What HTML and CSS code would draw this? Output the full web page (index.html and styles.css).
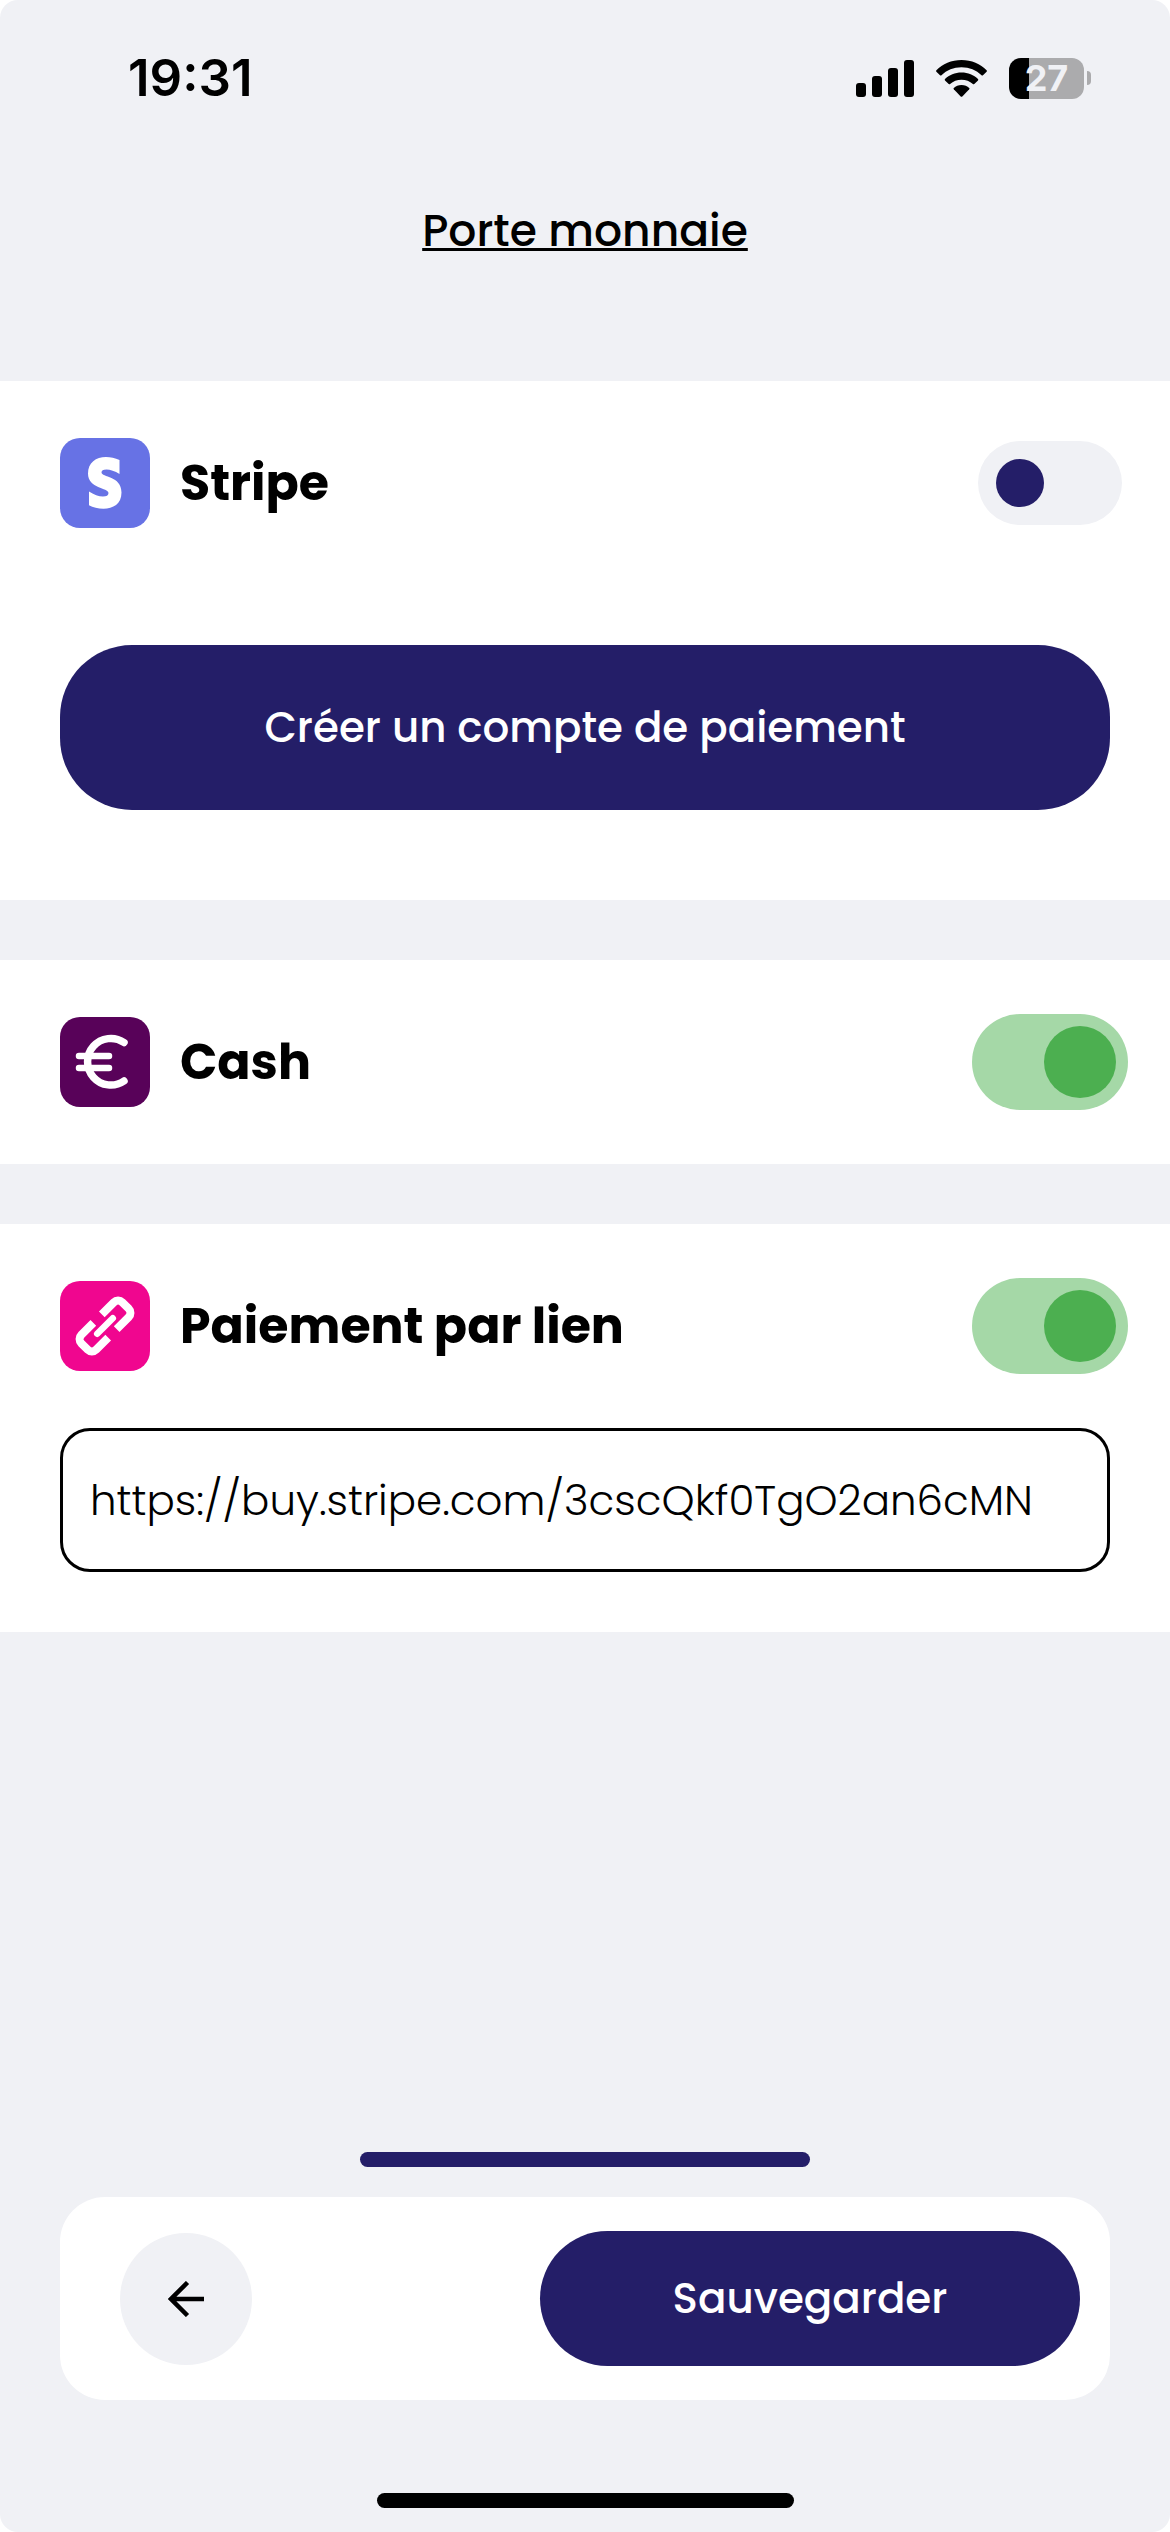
FILE: index.html
```html
<!DOCTYPE html>
<html lang="fr">
<head>
<meta charset="utf-8">
<meta name="viewport" content="width=device-width, initial-scale=1">
<title>Porte monnaie</title>
<link rel="stylesheet" href="styles.css">
</head>
<body>
<div class="screen">
  <div class="status">
    <time class="status-time">19:31</time>
    <div class="status-icons">
      <svg class="signal" viewBox="0 0 58 37" aria-hidden="true">
        <rect x="0" y="23" width="10" height="14" rx="3"/>
        <rect x="16" y="16" width="10" height="21" rx="3"/>
        <rect x="32" y="8" width="10" height="29" rx="3"/>
        <rect x="48" y="0" width="10" height="37" rx="3"/>
      </svg>
      <svg class="wifi" viewBox="0 0 51 37" aria-hidden="true">
        <path d="M25.500 0C35.500 0 44.500 4 50.600 10.200Q51.300 11 50.600 11.700L47 15.300Q46.300 15.800 45.500 15.200C40.300 10 33.300 7.200 25.500 7.200S10.700 10 5.500 15.200Q4.700 15.800 4 15.300L.4 11.700Q-.3 11 .4 10.200C6.500 4 15.500 0 25.500 0Z"/>
        <path d="M25.500 12.500C32 12.500 37.800 15 42 19Q42.600 19.700 42 20.400L38.300 24Q37.600 24.600 36.900 24C33.800 21.200 29.900 19.700 25.500 19.700S17.200 21.200 14.100 24Q13.400 24.600 12.700 24L9 20.400Q8.400 19.700 9 19C13.200 15 19 12.500 25.500 12.500Z"/>
        <path d="M25.500 25C28.600 25 31.300 26.100 33.200 27.900Q33.800 28.600 33.200 29.300L26.300 36.400Q25.500 37.200 24.700 36.400L17.800 29.300Q17.200 28.600 17.800 27.900C19.700 26.100 22.400 25 25.500 25Z"/>
      </svg>
      <div class="battery"><span class="battery-level">27</span><span class="battery-cap"></span></div>
    </div>
  </div>

  <h1 class="title">Porte monnaie</h1>

  <main class="methods">
    <section class="method">
      <div class="method-row">
        <svg class="method-icon" viewBox="0 0 90 90" aria-hidden="true">
          <rect width="90" height="90" rx="20" fill="#6772e5"/>
          <path fill="#fff" d="M59.500 22V36C55 33 50 31.500 46.500 31.500C43 31.500 41.500 32.800 41.500 34.500C41.500 39.500 61.500 37.500 61.500 54.500C61.500 66 53 70.700 43.500 70.700C38 70.700 33 69.500 29 67.200V53.500C33.500 56.500 39 58.500 43 58.500C46.500 58.500 48.500 57.500 48.500 55C48.500 49.500 28 51 28 35.500C28 24.500 36 19 46 19C50.500 19 55 20 59.500 22Z"/>
        </svg>
        <label class="method-name" for="stripe">Stripe</label>
        <input class="toggle" type="checkbox" role="switch" id="stripe">
      </div>
      <button class="button button-create" type="button">Créer un compte de paiement</button>
    </section>

    <section class="method">
      <div class="method-row">
        <svg class="method-icon" viewBox="0 0 90 90" aria-hidden="true">
          <rect width="90" height="90" rx="20" fill="#580259"/>
          <g fill="none" stroke="#fff" stroke-linecap="round">
            <path stroke-width="7.500" d="M64 25.500A23.300 23.300 0 1 0 64 64"/>
            <path stroke-width="6.500" d="M19 39H49M19 51H49"/>
          </g>
        </svg>
        <label class="method-name" for="cash">Cash</label>
        <input class="toggle" type="checkbox" role="switch" id="cash" checked>
      </div>
    </section>

    <section class="method method-link">
      <div class="method-row">
        <svg class="method-icon" viewBox="0 0 90 90" aria-hidden="true">
          <rect width="90" height="90" rx="20" fill="#f0068f"/>
          <g fill="none" stroke="#fff" stroke-width="8" transform="rotate(-45 45 45)">
            <path d="M51 34.500H68a6 6 0 0 1 6 6V49.500a6 6 0 0 1 -6 6H51M39 34.500H22a6 6 0 0 0 -6 6V49.500a6 6 0 0 0 6 6H39"/>
            <path stroke-width="6.500" stroke-linecap="round" d="M34 45H56"/>
          </g>
        </svg>
        <label class="method-name" for="link">Paiement par lien</label>
        <input class="toggle" type="checkbox" role="switch" id="link" checked>
      </div>
      <input class="url" type="url" aria-label="Lien de paiement" value="https://buy.stripe.com/3cscQkf0TgO2an6cMN">
    </section>
  </main>

  <footer class="footer">
    <div class="handle"></div>
    <nav class="actions">
      <button class="back" type="button" aria-label="Retour">
        <svg class="back-icon" viewBox="0 0 36 36" aria-hidden="true"><path d="M36 18H3M19.500 1.500L3 18L19.500 34.500" fill="none" stroke="#000" stroke-width="4.500"/></svg>
      </button>
      <button class="button button-save" type="button">Sauvegarder</button>
    </nav>
    <div class="home-bar"></div>
  </footer>
</div>
</body>
</html>
```
FILE: styles.css
```css
* {
  box-sizing: border-box;
}

body {
  margin: 0;
  background: #fff;
  color: #000;
  font-family: "Poppins", "Inter", sans-serif;
}

.screen {
  display: flex;
  flex-direction: column;
  min-height: 100vh;
  background: #f0f1f5;
  border-radius: 18px;
}

/* Status bar */
.status {
  display: flex;
  align-items: center;
  justify-content: space-between;
  padding: 48px 79px 0 128px;
}

.status-time {
  font-family: "Inter", sans-serif;
  font-size: 51px;
  line-height: 60px;
  font-weight: 600;
}

.status-icons {
  display: flex;
  align-items: center;
  gap: 22px;
}

.signal {
  width: 58px;
  height: 37px;
}

.wifi {
  width: 51px;
  height: 37px;
}

.battery {
  display: flex;
  align-items: center;
  gap: 3px;
}

.battery-level {
  width: 75px;
  height: 41px;
  border-radius: 12px;
  background: linear-gradient(to right, #000 27%, #ababad 27%);
  color: #f0f1f5;
  font-family: "Inter", sans-serif;
  font-size: 36px;
  line-height: 41px;
  font-weight: 700;
  text-align: center;
}

.battery-cap {
  width: 4px;
  height: 14px;
  border-radius: 0 4px 4px 0;
  background: #ababad;
}

.title {
  margin: 92px 0 120px;
  font-size: 44px;
  line-height: 61px;
  font-weight: 500;
  text-align: center;
  text-decoration: underline;
  text-decoration-thickness: 3px;
  text-underline-offset: 2px;
}

/* Payment methods */
.methods {
  display: flex;
  flex-direction: column;
  gap: 60px;
}

.method {
  padding: 54px 60px;
  background: #fff;
}

.method-row {
  display: flex;
  align-items: center;
  gap: 30px;
  height: 96px;
  margin-right: -18px;
}

.method-icon {
  flex: none;
  width: 90px;
  height: 90px;
}

.method-name {
  flex: 1;
  font-size: 49px;
  line-height: 60px;
  font-weight: 700;
}

.toggle {
  appearance: none;
  display: flex;
  align-items: center;
  width: 144px;
  height: 84px;
  margin: 0 6px;
  padding: 0 18px;
  border-radius: 42px;
  background: #f0f1f5;
}

.toggle::before {
  content: "";
  width: 48px;
  height: 48px;
  border-radius: 50%;
  background: #241e68;
}

.toggle:checked {
  justify-content: flex-end;
  width: 156px;
  height: 96px;
  margin: 0;
  padding: 0 12px;
  border-radius: 48px;
  background: #a5d8a7;
}

.toggle:checked::before {
  width: 72px;
  height: 72px;
  background: #4caf50;
}

.button {
  border: 0;
  border-radius: 72px;
  background: #241e68;
  color: #fff;
  font-family: inherit;
  font-size: 42px;
  line-height: 61px;
  font-weight: 500;
}

.button-create {
  display: block;
  width: 100%;
  margin: 114px 0 36px;
  padding: 52px;
}

.method-link {
  padding-bottom: 60px;
}

.url {
  display: block;
  width: 100%;
  height: 144px;
  margin-top: 54px;
  padding: 0 27px;
  border: 3px solid #000;
  border-radius: 30px;
  background: #fff;
  color: #000;
  font-family: inherit;
  font-size: 42px;
  font-weight: 300;
}

/* Bottom actions */
.footer {
  display: flex;
  flex-direction: column;
  align-items: center;
  margin-top: auto;
  padding: 30px 60px 24px;
}

.handle {
  width: 450px;
  height: 15px;
  border-radius: 8px;
  background: #241e68;
}

.actions {
  display: flex;
  align-items: center;
  justify-content: space-between;
  width: 100%;
  margin: 30px 0 93px;
  padding: 34px 30px 34px 60px;
  border-radius: 45px;
  background: #fff;
}

.back {
  display: flex;
  align-items: center;
  justify-content: center;
  width: 132px;
  height: 132px;
  padding: 0;
  border: 0;
  border-radius: 50%;
  background: #f0f1f5;
}

.back-icon {
  width: 36px;
  height: 36px;
}

.button-save {
  width: 540px;
  padding: 37px;
}

.home-bar {
  width: 417px;
  height: 15px;
  border-radius: 8px;
  background: #000;
}
```
